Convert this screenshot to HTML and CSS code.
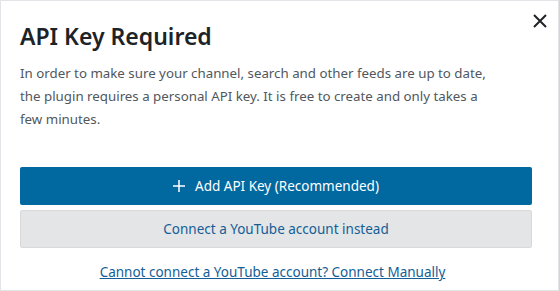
FILE: index.html
```html
<!DOCTYPE html>
<html lang="en">
<head>
  <meta charset="UTF-8">
  <title>API Key Required</title>
  <link rel="stylesheet" href="styles.css">
</head>
<body>
  <div class="modal">
    <button class="close" aria-label="Close">
      <svg width="14" height="14" viewBox="0 0 14 14"><path d="M1 1L13 13M13 1L1 13" stroke="#1e2327" stroke-width="2" fill="none"/></svg>
    </button>
    <h1>API Key Required</h1>
    <p class="desc">In order to make sure your channel, search and other feeds are up to date, the plugin requires a personal API key. It is free to create and only takes a few minutes.</p>
    <div class="actions">
      <button class="btn primary">
        <svg width="12" height="12" viewBox="0 0 12 12"><path d="M6 0V12M0 6H12" stroke="#fff" stroke-width="1.5"/></svg>
        Add API Key (Recommended)
      </button>
      <button class="btn secondary">Connect a YouTube account instead</button>
    </div>
    <a class="manual" href="#">Cannot connect a YouTube account? Connect Manually</a>
  </div>
</body>
</html>
```

FILE: styles.css
```css
body {
  margin: 0;
  font-family: "Noto Sans", sans-serif;
  background: #fff;
}
.modal {
  position: relative;
  box-sizing: border-box;
  width: 559px;
  height: 291px;
  border: 1px solid #e2e4e7;
  padding: 17px 26px 0 19px;
}
.close {
  position: absolute;
  top: 12px;
  right: 10px;
  background: none;
  border: none;
  padding: 0;
  width: 16px;
  height: 16px;
  display: flex;
  align-items: center;
  justify-content: center;
}
h1 {
  margin: 0 0 8px;
  font-size: 23px;
  font-weight: 600;
  color: #1d2327;
  line-height: 36px;
}
.desc {
  margin: 0;
  max-width: 466px;
  font-size: 13.3px;
  line-height: 23px;
  color: #50575e;
}
.actions {
  margin-top: 36px;
  display: flex;
  flex-direction: column;
  gap: 5px;
}
.btn {
  font-family: inherit;
  height: 38px;
  border-radius: 2px;
  font-size: 13.5px;
  display: flex;
  align-items: center;
  justify-content: center;
  gap: 10px;
  cursor: pointer;
}
.primary {
  background: #0268a0;
  color: #fff;
  border: none;
}
.secondary {
  background: #e4e5e7;
  color: #135e96;
  border: 1px solid #d8d9db;
}
.manual {
  display: block;
  margin: 15px 7px 0 0;
  text-align: center;
  font-size: 13.5px;
  color: #135e96;
}
```
